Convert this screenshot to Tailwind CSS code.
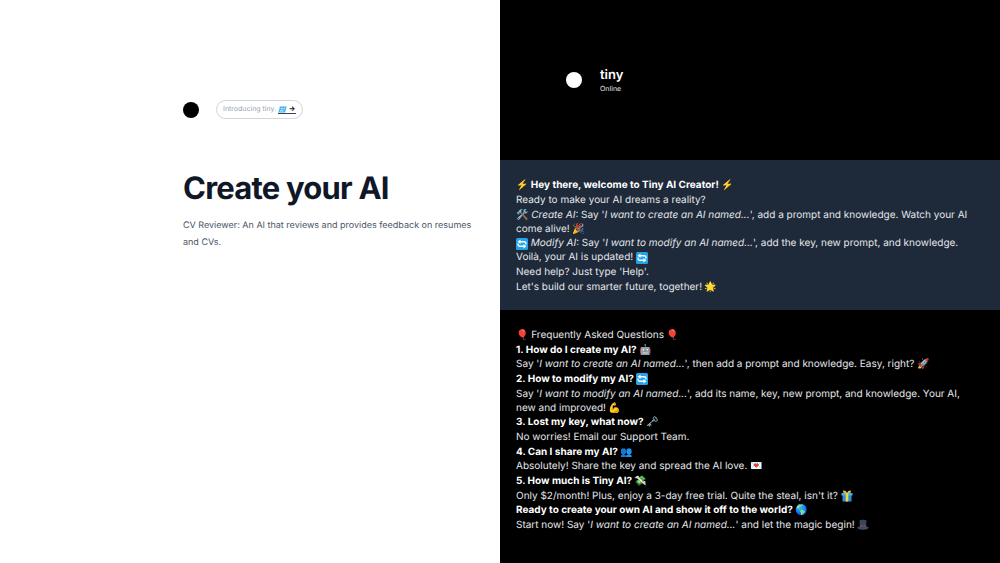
<!DOCTYPE html>
<html lang="en">
<head>
<meta charset="utf-8">
<meta name="viewport" content="width=device-width, initial-scale=1">
<title>Tiny AI</title>
<script src="https://cdn.jsdelivr.net/npm/@tailwindcss/browser@4"></script>
</head>
<body class="min-h-screen bg-white font-['Inter',sans-serif] [text-rendering:geometricPrecision]">
<svg class="hidden" aria-hidden="true">
  <symbol id="repeat" viewBox="0 0 24 24">
    <rect width="24" height="24" rx="3" fill="#22a3ea"/>
    <path d="M20 13v-2a3.500 3.500 0 0 0-3.500-3.500H8M4 11v2a3.500 3.500 0 0 0 3.500 3.500H16" fill="none" stroke="#fff" stroke-width="2.600"/>
    <path d="M9 3L3 7.500 9 12zM15 12l6 4.500-6 4.500z" fill="#fff"/>
  </symbol>
  <symbol id="gift" viewBox="0 0 24 24">
    <path d="M3 10h18v13H3z" fill="#2f8fd0"/><path d="M1 6h22v5H1z" fill="#4aaee8"/>
    <path d="M9.500 6h5v17h-5z" fill="#f5d442"/>
    <path d="M12 6C9 0 4 0 4 3s4 4 8 3c4 1 8 0 8-3s-5-3-8 3z" fill="#e8c12f"/>
  </symbol>
  <symbol id="hat" viewBox="0 0 24 24">
    <path d="M5 3c3-2 11-2 14 0l-1 14H6z" fill="#34495e"/>
    <path d="M5.500 12c4 2 9 2 13 0l-.5 5H6z" fill="#75504f"/>
    <path d="M1 17c0-2 2-2 5-1 4 2 8 2 12 0 3-1 5-1 5 1 0 6-22 6-22 0z" fill="#3a5068"/>
  </symbol>
  <symbol id="ice" viewBox="0 0 24 18">
    <path d="M5 1h18l-4 16H1z" fill="#45b5ee"/>
    <path d="M8 5h5l-1 3H7zM15 5h4l-1 3h-4zM6 11h9l-1 3H5z" fill="#c4eaff"/>
  </symbol>
</svg>
<div class="grid min-h-screen grid-cols-2">
  <main class="pt-[100px] pr-4 pl-[183px]">
    <div class="flex items-center gap-[17px]">
      <div class="size-4 rounded-full bg-black"></div>
      <div class="flex h-[19px] items-center gap-0.5 rounded-full border border-gray-300 px-1.5 text-[7px] text-gray-400">
        <span>Introducing tiny.</span>
        <a href="#" class="border-b border-gray-700 leading-[7px] font-bold text-gray-900"><svg class="inline h-[7px] w-[9px]" role="img" aria-label="ice"><use href="#ice"/></svg> →</a>
      </div>
    </div>
    <h1 class="mt-[50px] text-[31px] leading-10 font-bold tracking-tight text-gray-900">Create your AI</h1>
    <p class="mt-2 text-[9px] leading-[17px] text-gray-600">CV Reviewer: An AI that reviews and provides feedback on resumes and CVs.</p>
  </main>
  <div class="flex flex-col bg-black text-[10px] leading-[14px] text-gray-200">
    <header class="flex h-40 items-center gap-[18px] pl-[66px]">
      <div class="size-4 rounded-full bg-white"></div>
      <div class="pt-1">
        <h2 class="text-[13px] font-semibold text-white">tiny</h2>
        <p class="text-[7px]">Online</p>
      </div>
    </header>
    <section class="bg-gray-800 px-4 pt-[18px] pb-4">
      <div class="flex min-h-[116px] flex-col justify-between">
        <p class="font-bold text-white">⚡ Hey there, welcome to Tiny AI Creator! ⚡</p>
        <p>Ready to make your AI dreams a reality?</p>
        <p>🛠️ <em>Create AI</em>: Say '<em>I want to create an AI named...</em>', add a prompt and knowledge. Watch your AI come alive! 🎉</p>
        <p><svg class="inline size-3" role="img" aria-label="repeat"><use href="#repeat"/></svg> <em>Modify AI</em>: Say '<em>I want to modify an AI named...</em>', add the key, new prompt, and knowledge. Voilà, your AI is updated! <svg class="inline size-3" role="img" aria-label="repeat"><use href="#repeat"/></svg></p>
        <p>Need help? Just type 'Help'.</p>
        <p>Let's build our smarter future, together! 🌟</p>
      </div>
    </section>
    <section class="pt-[18px] pr-5 pb-4 pl-4">
      <div class="flex min-h-[204px] flex-col justify-between">
        <p>🎈 Frequently Asked Questions 🎈</p>
        <h3 class="font-bold text-white">1. How do I create my AI? 🤖</h3>
        <p>Say '<em>I want to create an AI named...</em>', then add a prompt and knowledge. Easy, right? 🚀</p>
        <h3 class="font-bold text-white">2. How to modify my AI? <svg class="inline size-3" role="img" aria-label="repeat"><use href="#repeat"/></svg></h3>
        <p>Say '<em>I want to modify an AI named...</em>', add its name, key, new prompt, and knowledge. Your AI, new and improved! 💪</p>
        <h3 class="font-bold text-white">3. Lost my key, what now? 🗝️</h3>
        <p>No worries! Email our Support Team.</p>
        <h3 class="font-bold text-white">4. Can I share my AI? 👥</h3>
        <p>Absolutely! Share the key and spread the AI love. 💌</p>
        <h3 class="font-bold text-white">5. How much is Tiny AI? 💸</h3>
        <p>Only $2/month! Plus, enjoy a 3-day free trial. Quite the steal, isn't it? <svg class="inline size-3" role="img" aria-label="gift"><use href="#gift"/></svg></p>
        <h3 class="font-bold text-white">Ready to create your own AI and show it off to the world? 🌎</h3>
        <p>Start now! Say '<em>I want to create an AI named...</em>' and let the magic begin! <svg class="inline size-3" role="img" aria-label="top hat"><use href="#hat"/></svg></p>
      </div>
    </section>
  </div>
</div>
</body>
</html>
